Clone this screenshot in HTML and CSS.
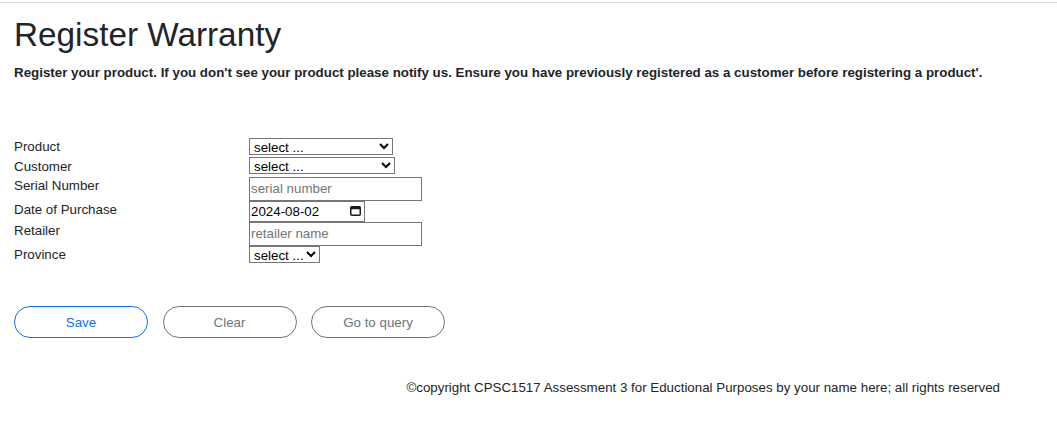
FILE: index.html
```html
<!DOCTYPE html>
<html lang="en">
<head>
<meta charset="utf-8">
<title>Register Warranty</title>
<link rel="stylesheet" href="styles.css">
</head>
<body>
<div class="topline"></div>
<main class="page">
  <h1 class="title">Register Warranty</h1>
  <p class="lead">Register your product. If you don't see your product please notify us. Ensure you have previously registered as a customer before registering a product'.</p>

  <form class="form">
    <div class="fields">
      <label class="lbl" for="product">Product</label>
      <select id="product" class="sel sel-product"><option>select ...</option></select>

      <label class="lbl" for="customer">Customer</label>
      <select id="customer" class="sel sel-customer"><option>select ...</option></select>

      <label class="lbl" for="serial">Serial Number</label>
      <input id="serial" class="txt" type="text" placeholder="serial number">

      <label class="lbl" for="dop">Date of Purchase</label>
      <span class="date">
        <input id="dop" class="date-txt" type="text" value="2024-08-02">
        <svg class="cal" width="11" height="10" viewBox="0 0 11 10" aria-hidden="true">
          <rect x="0.75" y="0.75" width="9.5" height="8.5" rx="1" fill="none" stroke="#1a1a1a" stroke-width="1.5"/>
          <rect x="0.75" y="0.75" width="9.5" height="2.5" fill="#1a1a1a"/>
        </svg>
      </span>

      <label class="lbl" for="retailer">Retailer</label>
      <input id="retailer" class="txt" type="text" placeholder="retailer name">

      <label class="lbl" for="province">Province</label>
      <select id="province" class="sel sel-province"><option>select ...</option></select>
    </div>

    <div class="actions">
      <button type="button" class="btn btn-primary">Save</button>
      <button type="button" class="btn btn-secondary">Clear</button>
      <button type="button" class="btn btn-secondary">Go to query</button>
    </div>
  </form>

  <footer class="footer">&copy;copyright CPSC1517 Assessment 3 for Eductional Purposes by your name here; all rights reserved</footer>
</main>
</body>
</html>
```

FILE: styles.css
```css
* { box-sizing: border-box; }

html, body {
  margin: 0;
  padding: 0;
  background: #fff;
}

body {
  font-family: "Liberation Sans", Arial, sans-serif;
  font-size: 13.33px;
  line-height: 1.5;
  color: #212529;
}

.topline {
  margin-top: 2px;
  height: 1px;
  background: #dcdcdc;
}

.page {
  padding: 0 14px;
}

.title {
  margin: 12px 0 8px;
  font-size: 33.3px;
  font-weight: 400;
  line-height: 1.2;
}

.lead {
  margin: 0;
  font-weight: 700;
}

.form {
  margin-top: 55px;
}

.fields {
  display: grid;
  grid-template-columns: 235px auto;
  grid-auto-rows: minmax(19.5px, auto);
  align-items: start;
  justify-items: start;
}

.lbl {
  line-height: 16px;
  margin-top: 1.5px;
}

.sel {
  font-family: "Liberation Sans", Arial, sans-serif;
  font-size: 13.33px;
  color: #000;
  height: 17px;
  padding: 0;
  border: 1px solid #767676;
  border-radius: 0;
  background-color: #fff;
}

.sel-product { width: 144px; }
.sel-customer { width: 146px; }
.sel-province { width: 71px; }

.txt {
  font-family: "Liberation Sans", Arial, sans-serif;
  font-size: 13.33px;
  line-height: 20px;
  width: 173px;
  height: 24px;
  padding: 1px 1px;
  border: 1px solid #767676;
  border-radius: 0;
  color: #000;
  background: #fff;
}

.txt::placeholder { color: #757575; }

.date {
  display: inline-flex;
  align-items: center;
  width: 116px;
  height: 21px;
  border: 1px solid #767676;
  background: #fff;
}

.date-txt {
  flex: 1 1 auto;
  min-width: 0;
  border: 0;
  padding: 0 0 0 1px;
  font-family: "Liberation Sans", Arial, sans-serif;
  font-size: 13.33px;
  line-height: 18px;
  height: 19px;
  color: #000;
  background: transparent;
  outline: none;
}

.cal {
  flex: 0 0 auto;
  margin-right: 3px;
}

.actions {
  display: flex;
  gap: 14.5px;
  margin-top: 41px;
}

.btn {
  width: 134px;
  height: 32px;
  border-radius: 999px;
  background: #fff;
  font-family: "Liberation Sans", Arial, sans-serif;
  font-size: 13.33px;
  line-height: 1;
  cursor: pointer;
}

.btn-primary {
  border: 1px solid #0d6efd;
  color: #0d6efd;
}

.btn-secondary {
  border: 1px solid #6c757d;
  color: #6c757d;
}

.footer {
  margin-top: 40px;
  padding-right: 43px;
  text-align: right;
}
```
